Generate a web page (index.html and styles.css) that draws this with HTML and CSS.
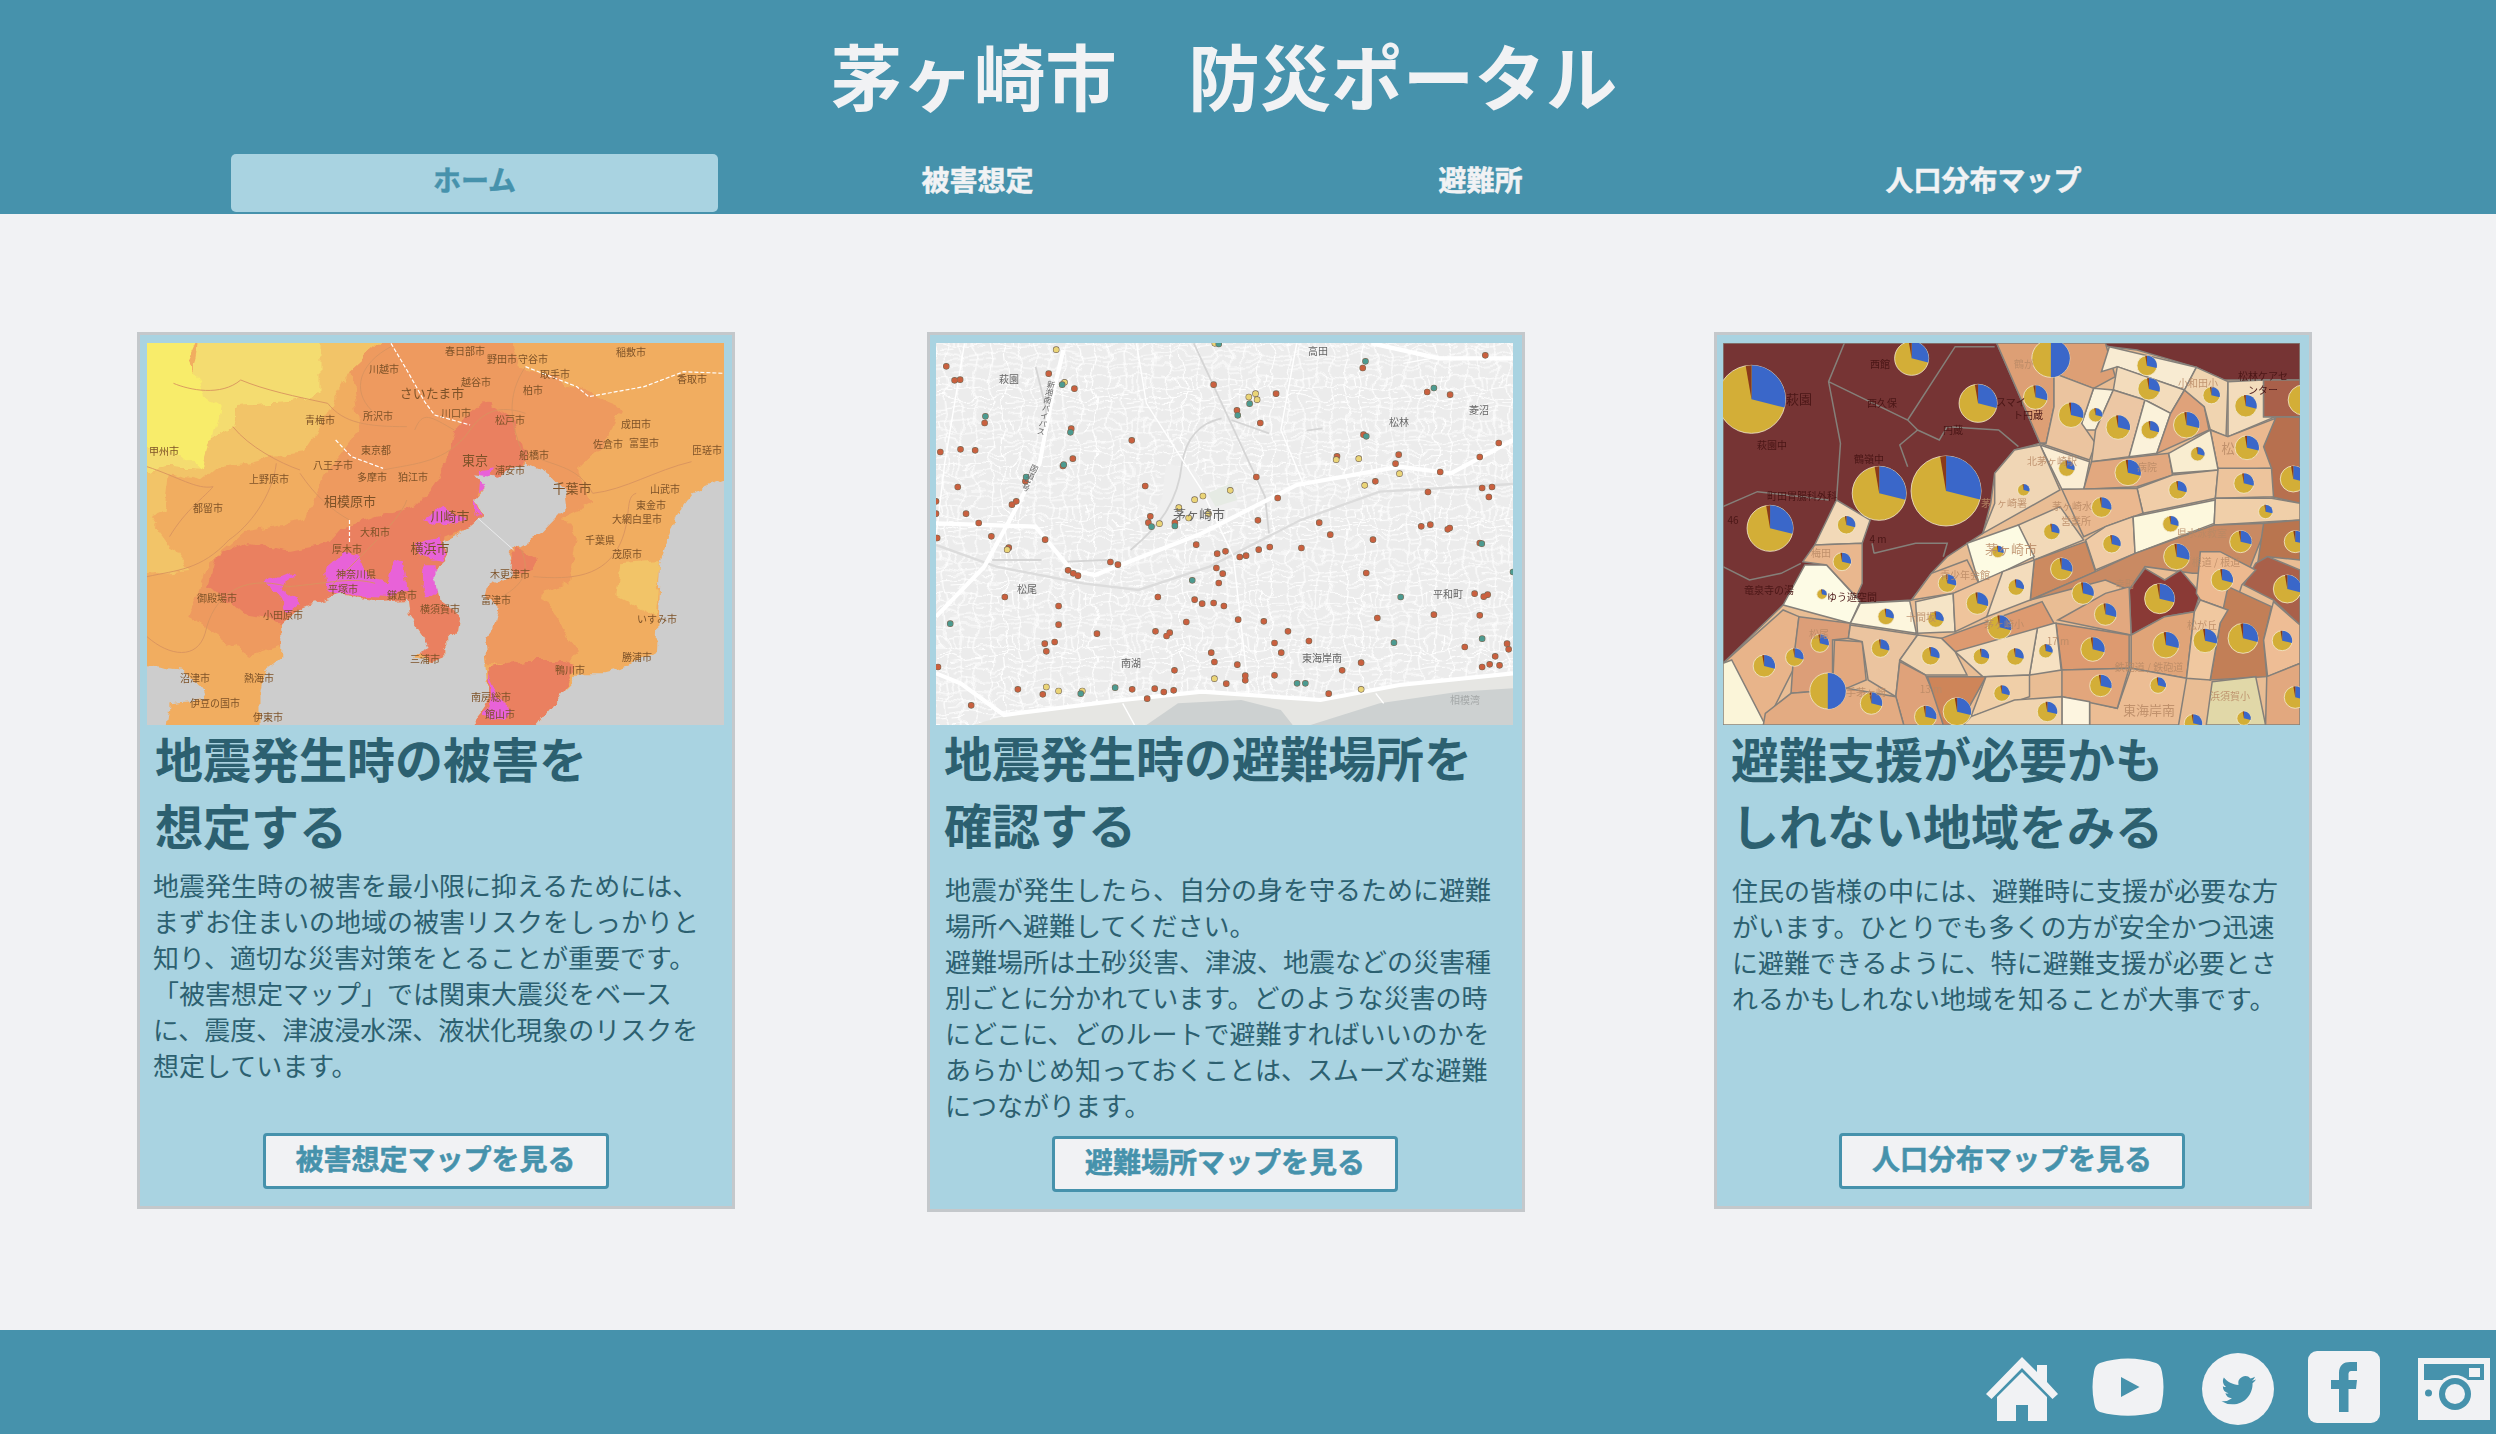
FILE: index.html
```html
<!DOCTYPE html>
<html lang="ja">
  <head>
    <meta charset="UTF-8" />
    <title>茅ヶ崎市　防災ポータル</title>
    <link rel="stylesheet" href="styles.css">
  </head>

  <body>
    <!-- ヘッダー -->
    <header class="site-header">
      <h1 class="site-title">茅ヶ崎市　防災ポータル</h1>
      <nav class="site-nav">
        <a class="nav-item nav-item--active" href="#">ホーム</a>
        <a class="nav-item" href="#">被害想定</a>
        <a class="nav-item" href="#">避難所</a>
        <a class="nav-item" href="#">人口分布マップ</a>
      </nav>
    </header>

    <main class="cards">
      <!-- 被害想定 -->
      <section class="card card--quake">
        <svg class="map" viewBox="0 0 577 382">
          <defs>
            <filter id="rough" x="-5%" y="-5%" width="110%" height="110%">
              <feTurbulence type="fractalNoise" baseFrequency="0.07" numOctaves="3" seed="4" />
              <feDisplacementMap in="SourceGraphic" scale="11" xChannelSelector="R" yChannelSelector="G" />
            </filter>
          </defs>
          <rect width="577" height="382" fill="#f1ad60" />
          <g filter="url(#rough)">
            <g transform="scale(.39547 .33333) translate(-43 -39)">
              <polygon fill="#f4dc70" points="180,10 480,10 480,190 420,215 280,225 260,290 200,340 180,420 90,415 10,430 10,340 130,370" />
              <polygon fill="#f8ec6a" points="10,10 180,10 150,90 190,200 230,230 210,330 180,420 130,370 10,340" />
              <polygon fill="#f2c468" points="480,10 660,10 560,120 520,200 480,300 440,370 360,380 300,400 215,415 180,450 100,430 90,540 50,560 100,640 150,720 10,740 10,430 90,415 180,420 200,340 260,290 280,225 420,215 480,190" />
              <polygon fill="#f2c468" points="1240,700 1340,690 1330,860 1230,800" />
              <polygon fill="#ee9a5e" points="660,10 950,10 990,110 1120,170 1240,230 1210,330 1130,420 1170,520 1100,560 1130,620 1110,760 1040,790 1130,960 1110,1000 900,1000 880,800 700,900 400,940 300,980 200,900 150,860 200,700 300,600 440,570 500,420 580,300 560,120" />
              <polygon fill="#ea8060" points="820,300 900,210 960,260 990,340 1000,390 940,460 880,480 870,520 890,560 860,590 800,620 790,650 800,690 770,720 770,770 780,810 835,860 830,900 790,950 790,985 760,1000 720,960 745,930 705,860 700,810 640,815 530,795 440,825 385,880 330,860 280,850 200,770 220,680 300,640 400,660 500,640 530,600 620,560 720,530 760,480 800,400" />
              <polygon fill="#ea8060" points="905,1010 1000,990 1100,990 1130,1000 1100,1080 1010,1215 845,1215 890,1150 905,1100" />
              <polygon fill="#ea8060" points="960,700 985,650 1030,690 1020,720 960,730" />
              <polygon fill="#e862d8" points="490,720 540,670 580,680 600,740 650,760 670,690 690,700 700,780 650,800 530,795 500,780" />
              <polygon fill="#e862d8" points="340,760 400,730 420,740 380,770 430,820 400,850 380,800" />
              <polygon fill="#e862d8" points="720,640 780,620 795,690 740,680" />
              <polygon fill="#e862d8" points="745,700 770,700 775,780 750,800 740,770" />
              <polygon fill="#e862d8" points="740,570 790,530 850,570 790,590" />
              <polygon fill="#e862d8" points="885,420 920,415 900,470 880,490" />
              <polygon fill="#e862d8" points="870,510 885,560 870,550" />
              <polygon fill="#e862d8" points="905,1030 930,1100 970,1140 950,1170 890,1160 915,1110" />
              <!-- 海 -->
              <polygon fill="#cdcdcd" points="385,880 440,825 530,795 640,815 700,810 705,860 745,930 755,960 720,980 760,1000 790,985 790,950 830,900 835,860 780,810 770,760 770,720 800,690 790,640 860,590 890,560 870,510 900,470 870,430 930,440 1000,400 1060,430 1100,480 1105,530 1040,610 970,660 960,700 960,730 900,770 895,795 935,830 920,900 895,940 900,1020 905,1100 890,1150 845,1215 330,1215 330,1080 340,1020 385,980" />
              <polygon fill="#cdcdcd" points="10,1000 130,1020 175,1060 190,1110 100,1120 90,1215 10,1215" />
              <polygon fill="#cdcdcd" points="1010,1215 1100,1080 1140,1030 1200,1030 1260,1010 1330,960 1335,860 1340,700 1380,560 1430,480 1535,430 1535,1215" />
            </g>
          </g>
          <g transform="scale(.39547 .33333) translate(-43 -39)">
            <!-- 道路 -->
            <path class="map-line map-line--road" d="M43 410C120 440 170 480 210 470M43 740C120 720 180 720 250 630C300 590 360 500 370 400M100 620C140 540 190 500 210 470M430 430C470 500 510 540 555 570M640 420C720 400 800 400 860 300C900 230 950 230 1000 250M700 510C680 580 560 700 500 780M1010 370C1060 410 1130 400 1170 490C1250 480 1330 420 1420 395M1020 740C1120 750 1200 740 1240 640C1270 560 1250 500 1280 490M940 800C1000 760 1010 720 990 660M43 920C100 980 170 990 190 910C210 800 280 730 400 770C500 760 560 740 620 760M610 240C560 180 580 100 660 50M1000 110C950 200 960 280 1000 390M820 300C760 260 740 240 720 300M260 290C300 350 380 400 430 420M110 160C150 180 230 200 280 150C340 180 420 200 500 220C540 280 600 290 700 290" />
            <path class="map-line map-line--river" d="M660 40L700 120 745 215 770 255 860 285M1000 110L1130 170 1160 200 1300 170 1400 125 1502 130M520 330L560 380 640 415M555 570V640" />
            <path class="map-line map-line--bridge" d="M880 565L970 660" />
          </g>
          <g class="map-labels map-labels--quake">
            <text x="318" y="7">春日部市</text><text x="355" y="15">野田市</text><text x="386" y="15">守谷市</text>
            <text x="237" y="25">川越市</text><text x="329" y="38">越谷市</text><text class="map-big" x="285" y="49">さいたま市</text>
            <text x="386" y="46">柏市</text><text x="484" y="8">稲敷市</text><text x="545" y="35">香取市</text>
            <text x="408" y="30">取手市</text><text x="309" y="69">川口市</text><text x="363" y="76">松戸市</text>
            <text x="231" y="72">所沢市</text><text x="173" y="76">青梅市</text><text x="489" y="80">成田市</text>
            <text x="461" y="100">佐倉市</text><text x="497" y="99">富里市</text><text x="560" y="106">匝瑳市</text>
            <text x="17" y="107">甲州市</text><text x="229" y="106">東京都</text><text class="map-big" x="328" y="116">東京</text>
            <text x="387" y="111">船橋市</text><text x="186" y="121">八王子市</text><text x="363" y="126">浦安市</text>
            <text x="225" y="133">多摩市</text><text x="266" y="133">狛江市</text><text x="122" y="135">上野原市</text>
            <text class="map-big" x="425" y="144">千葉市</text><text x="518" y="145">山武市</text><text class="map-big" x="203" y="157">相模原市</text>
            <text x="504" y="161">東金市</text><text x="61" y="164">都留市</text><text class="map-big" x="303" y="172">川崎市</text>
            <text x="490" y="175">大網白里市</text><text x="228" y="188">大和市</text><text x="453" y="196">千葉県</text>
            <text class="map-big" x="283" y="204">横浜市</text><text x="200" y="205">厚木市</text><text x="480" y="210">茂原市</text>
            <text x="209" y="230">神奈川県</text><text x="363" y="230">木更津市</text><text x="196" y="245">平塚市</text>
            <text x="255" y="251">鎌倉市</text><text x="70" y="254">御殿場市</text><text x="349" y="256">富津市</text>
            <text x="293" y="265">横須賀市</text><text x="136" y="271">小田原市</text><text x="510" y="275">いすみ市</text>
            <text x="278" y="315">三浦市</text><text x="490" y="313">勝浦市</text><text x="423" y="326">鴨川市</text>
            <text x="48" y="334">沼津市</text><text x="112" y="334">熱海市</text><text x="344" y="353">南房総市</text>
            <text x="68" y="359">伊豆の国市</text><text x="353" y="370">館山市</text><text x="121" y="373">伊東市</text>
          </g>
        </svg>
        <h2 class="card-title">地震発生時の被害を<br>想定する</h2>
        <p class="card-text">地震発生時の被害を最小限に抑えるためには、まずお住まいの地域の被害リスクをしっかりと知り、適切な災害対策をとることが重要です。<br>「被害想定マップ」では関東大震災をベースに、震度、津波浸水深、液状化現象のリスクを想定しています。</p>
        <a class="card-button" href="#">被害想定マップを見る</a>
      </section>

      <!-- 避難所 -->
      <section class="card card--shelter">
        <svg class="map" viewBox="0 0 577 382">
          <defs>
            <pattern id="streets" width="150" height="130" patternUnits="userSpaceOnUse">
              <path class="map-street" d="M0 12L40 18 90 8 150 14M0 42L36 38 80 50 150 40M0 74L50 66 100 80 150 72M0 104L30 110 90 100 150 108M18 0L14 40 24 80 16 130M52 0L58 36 48 74 54 130M92 0L86 50 96 90 90 130M128 0L122 40 134 80 126 130M36 18L40 38M70 8L74 46M110 6L106 44M30 58L70 54M100 26L126 22M4 88L30 86M60 88L92 84M110 90L150 88M70 118L100 116M20 122L50 120M136 50L150 52" />
            </pattern>
            <filter id="wobble" x="-5%" y="-5%" width="110%" height="110%">
              <feTurbulence type="fractalNoise" baseFrequency="0.05" numOctaves="2" seed="9" />
              <feDisplacementMap in="SourceGraphic" scale="14" xChannelSelector="R" yChannelSelector="G" />
            </filter>
          </defs>
          <rect width="577" height="382" fill="#ececec" />
          <g filter="url(#wobble)">
            <g transform="scale(.39547 .33333) translate(-28 -39)">
              <rect x="0" y="10" width="1520" height="1210" fill="url(#streets)" />
            </g>
          </g>
          <g transform="scale(.39547 .33333) translate(-28 -39)">
            <polygon fill="#efefef" points="610,400 680,420 720,490 790,470 790,530 620,590 560,620 600,500" />
            <polygon fill="#e6ebe4" points="715,490 775,460 790,510 735,530" />
            <polygon fill="#e6e6e3" points="120,1185 200,1158 500,1112 700,1088 1000,1112 1200,1068 1487,1034 1487,1185" />
            <polygon fill="#cdd1d1" points="560,1185 640,1120 800,1110 900,1140 930,1185" />
            <polygon fill="#cdd1d1" points="975,1185 1150,1120 1350,1085 1487,1075 1487,1185" />
            <path class="map-line map-line--rail" d="M28 645L180 710 400 760 540 780 720 710 950 570 1150 485 1487 462" />
            <path class="map-line map-line--gray" d="M280 110L305 230 310 300 290 400M520 660C590 590 640 520 650 400C660 330 690 280 750 265M775 270L870 310M965 302L1005 295M170 690H295M360 695L460 690M680 40L860 500 870 610" />
            <path class="map-line map-line--main" d="M350 60L320 210 290 400 210 580 150 710 28 860M28 580L280 590 370 720 430 735 700 610 940 465 1200 410 1330 430 1487 330M28 1030L90 1060 200 1155 500 1110 700 1085 1000 1110 1200 1065 1487 1030M1130 40L1300 85 1487 85" />
            <path class="map-line map-line--minor" d="M535 40L560 220 700 480 780 680 820 1100M940 40L900 300 960 470M100 40L50 400 28 620M1210 100L1280 85M500 1120L530 1185M1140 1090L1160 1120" />
            <!-- 避難所の点 -->
            <path class="map-dot map-dot--edge" d="M54 109h0M75 151h0M89 149h0M313 131h0M378 176h0M730 164h0M888 191h0M1417 76h0M1107 114h0M1270 186h0M1328 194h0M789 241h0M848 279h0M151 279h0M370 296h0M523 331h0M1109 314h0M39 366h0M90 358h0M127 361h0M374 386h0M349 408h0M1042 379h0M1198 374h0M1190 401h0M1403 381h0M1451 339h0M838 441h0M1303 426h0M254 454h0M83 471h0M557 468h0M1139 454h0M1409 474h0M1434 471h0M1272 486h0M1426 501h0M892 504h0M231 514h0M220 524h0M28 514h0M28 551h0M104 551h0M570 559h0M136 579h0M565 578h0M632 578h0M842 571h0M997 578h0M1255 589h0M1278 584h0M1327 594h0M1322 598h0M168 619h0M31 624h0M304 629h0M1025 614h0M1133 629h0M686 644h0M1403 639h0M212 653h0M952 654h0M872 651h0M844 659h0M760 664h0M739 671h0M812 677h0M796 681h0M469 696h0M488 704h0M737 714h0M362 721h0M375 730h0M387 737h0M753 731h0M1116 729h0M743 759h0M589 801h0M202 801h0M682 809h0M701 821h0M730 819h0M756 828h0M1390 791h0M1423 794h0M1413 800h0M338 828h0M1287 854h0M1403 856h0M792 869h0M857 874h0M661 876h0M1144 864h0M338 884h0M583 904h0M918 904h0M619 908h0M611 918h0M435 911h0M328 936h0M303 941h0M884 939h0M971 933h0M1472 941h0M1365 951h0M1476 958h0M307 964h0M724 968h0M901 968h0M1442 979h0M732 996h0M790 1004h0M1103 998h0M1428 1003h0M1453 1006h0M1409 1011h0M33 1011h0M631 1021h0M1055 1021h0M810 1037h0M884 1036h0M810 1051h0M762 1061h0M235 1078h0M524 1078h0M581 1076h0M604 1086h0M629 1081h0M298 1093h0M562 1106h0M1021 1091h0M117 1126h0" />
            <path class="map-dot map-dot--red" d="M54 109h0M75 151h0M89 149h0M313 131h0M378 176h0M730 164h0M888 191h0M1417 76h0M1107 114h0M1270 186h0M1328 194h0M789 241h0M848 279h0M151 279h0M370 296h0M523 331h0M1109 314h0M39 366h0M90 358h0M127 361h0M374 386h0M349 408h0M1042 379h0M1198 374h0M1190 401h0M1403 381h0M1451 339h0M838 441h0M1303 426h0M254 454h0M83 471h0M557 468h0M1139 454h0M1409 474h0M1434 471h0M1272 486h0M1426 501h0M892 504h0M231 514h0M220 524h0M28 514h0M28 551h0M104 551h0M570 559h0M136 579h0M565 578h0M632 578h0M842 571h0M997 578h0M1255 589h0M1278 584h0M1327 594h0M1322 598h0M168 619h0M31 624h0M304 629h0M1025 614h0M1133 629h0M686 644h0M1403 639h0M212 653h0M952 654h0M872 651h0M844 659h0M760 664h0M739 671h0M812 677h0M796 681h0M469 696h0M488 704h0M737 714h0M362 721h0M375 730h0M387 737h0M753 731h0M1116 729h0M743 759h0M589 801h0M202 801h0M682 809h0M701 821h0M730 819h0M756 828h0M1390 791h0M1423 794h0M1413 800h0M338 828h0M1287 854h0M1403 856h0M792 869h0M857 874h0M661 876h0M1144 864h0M338 884h0M583 904h0M918 904h0M619 908h0M611 918h0M435 911h0M328 936h0M303 941h0M884 939h0M971 933h0M1472 941h0M1365 951h0M1476 958h0M307 964h0M724 968h0M901 968h0M1442 979h0M732 996h0M790 1004h0M1103 998h0M1428 1003h0M1453 1006h0M1409 1011h0M33 1011h0M631 1021h0M1055 1021h0M810 1037h0M884 1036h0M810 1051h0M762 1061h0M235 1078h0M524 1078h0M581 1076h0M604 1086h0M629 1081h0M298 1093h0M562 1106h0M1021 1091h0M117 1126h0" />
            <path class="map-dot map-dot--edge" d="M332 59h0M353 157h0M819 201h0M836 191h0M840 209h0M1040 389h0M1097 386h0M1200 431h0M1112 466h0M772 481h0M703 498h0M682 509h0M642 533h0M667 564h0M717 551h0M593 581h0M208 659h0M732 1046h0M307 1071h0M338 1083h0M398 1083h0M1103 1078h0M733 40h0" />
            <path class="map-dot map-dot--yellow" d="M332 59h0M353 157h0M819 201h0M836 191h0M840 209h0M1040 389h0M1097 386h0M1200 431h0M1112 466h0M772 481h0M703 498h0M682 509h0M642 533h0M667 564h0M717 551h0M593 581h0M208 659h0M732 1046h0M307 1071h0M338 1083h0M398 1083h0M1103 1078h0M733 40h0" />
            <path class="map-dot map-dot--edge" d="M743 42h0M1114 94h0M347 164h0M1287 174h0M821 221h0M791 256h0M153 259h0M368 307h0M1116 319h0M351 404h0M256 441h0M573 590h0M632 588h0M1408 641h0M676 751h0M1203 801h0M64 881h0M1186 938h0M1409 926h0M941 1060h0M962 1060h0M481 1073h0M394 1091h0M1487 726h0" />
            <path class="map-dot map-dot--teal" d="M743 42h0M1114 94h0M347 164h0M1287 174h0M821 221h0M791 256h0M153 259h0M368 307h0M1116 319h0M351 404h0M256 441h0M573 590h0M632 588h0M1408 641h0M676 751h0M1203 801h0M64 881h0M1186 938h0M1409 926h0M941 1060h0M962 1060h0M481 1073h0M394 1091h0M1487 726h0" />
          </g>
          <g class="map-labels map-labels--shelter">
            <text x="73" y="35">萩園</text><text x="382" y="7">高田</text><text x="463" y="78">松林</text><text x="543" y="66">菱沼</text>
            <text class="map-big" x="263" y="170">茅ヶ崎市</text><text x="91" y="245">松尾</text><text x="512" y="250">平和町</text>
            <text x="195" y="319">南湖</text><text x="386" y="314">東海岸南</text><text class="map-faint" x="529" y="356">相模湾</text>
            <text class="map-road-name" transform="translate(110 65) rotate(12)">新湘南バイパス</text>
            <text class="map-road-name" transform="translate(94 135) rotate(24)">国道1号</text>
          </g>
        </svg>
        <h2 class="card-title">地震発生時の避難場所を<br>確認する</h2>
        <p class="card-text">地震が発生したら、自分の身を守るために避難場所へ避難してください。<br>避難場所は土砂災害、津波、地震などの災害種別ごとに分かれています。どのような災害の時にどこに、どのルートで避難すればいいのかをあらかじめ知っておくことは、スムーズな避難につながります。</p>
        <a class="card-button" href="#">避難場所マップを見る</a>
      </section>

      <!-- 人口分布 -->
      <section class="card card--aid">
        <svg class="map" viewBox="0 0 577 382">
          <defs>
            <g id="pie" transform="scale(2.529 3)">
              <circle class="pie-base" r="1" />
              <path class="pie-blue" d="M0 0V-1A1 1 0 0 1 .97 .24Z" />
              <path class="pie-brown" d="M0 0L-.17 -.98A1 1 0 0 1 0 -1Z" />
            </g>
            <g id="pie-half" transform="scale(2.529 3)">
              <circle class="pie-base" r="1" />
              <path class="pie-blue" d="M0 0V-1A1 1 0 0 1 0 1Z" />
            </g>
          </defs>
          <rect width="577" height="382" fill="#e9bd94" />
          <g class="map-areas" transform="scale(.39547 .33333) translate(-33 -39)">
            <polygon fill="#763434" points="33,39 725,39 835,340 770,360 720,430 710,520 690,610 600,680 560,730 510,810 380,820 185,825 33,1000" />
            <polygon fill="#763434" points="980,39 1492,39 1492,150 1300,150 1230,112 1080,60 1010,50" />
            <polygon fill="#dd9f75" points="725,39 1000,39 1025,140 970,175 870,130 870,230 850,340 835,340" />
            <polygon fill="#f8ebd2" points="1010,50 1230,112 1200,180 1030,110 990,125" />
            <polygon fill="#f3dcbc" points="1030,110 1200,180 1165,250 1100,210 1020,180" />
            <polygon fill="#fbf2da" points="970,175 1020,180 975,300 935,300 940,280" />
            <polygon fill="#ebc49f" points="870,130 970,175 940,280 975,340 960,390 835,340 850,340 870,230" />
            <polygon fill="#ecc7a4" points="1020,180 1100,210 1060,380 965,395 975,300" />
            <polygon fill="#fbf2da" points="1100,210 1165,250 1130,370 1060,380" />
            <polygon fill="#dfa27a" points="1200,180 1250,230 1262,300 1130,370 1165,250" />
            <polygon fill="#f0d4b0" points="1230,112 1310,155 1305,320 1265,298 1250,230 1200,180" />
            <polygon fill="#f3dcbc" points="1310,155 1400,150 1400,260 1430,260 1310,320" />
            <polygon fill="#a9604a" points="1400,150 1492,150 1492,260 1400,260" />
            <polygon fill="#b7704f" points="1430,260 1492,262 1492,520 1420,500 1400,350" />
            <polygon fill="#ebb98f" points="1310,320 1430,265 1400,350 1420,415 1285,420 1265,300" />
            <polygon fill="#fbeed4" points="835,345 960,395 945,480 890,478" />
            <polygon fill="#e2a87f" points="965,395 1160,370 1170,435 1080,470 945,478" />
            <polygon fill="#f9edd0" points="1160,370 1265,300 1285,420 1170,430" />
            <polygon fill="#f0cda8" points="1170,435 1285,420 1278,505 1095,550 1080,475" />
            <polygon fill="#edc49c" points="1285,415 1420,415 1425,500 1278,505" />
            <polygon fill="#f0d6b5" points="770,360 835,345 885,480 690,610 720,520 720,430" />
            <polygon fill="#eab88f" points="890,478 1080,475 1095,550 1000,590 945,620" />
            <polygon fill="#f2d9b8" points="780,585 885,530 945,630 820,690" />
            <polygon fill="#fdfbe3" points="650,640 780,585 820,680 680,760" />
            <polygon fill="#f0cba6" points="950,630 1000,590 1070,560 1075,670 975,720" />
            <polygon fill="#fdf8dd" points="1070,560 1278,510 1275,580 1075,670" />
            <polygon fill="#f0cfa9" points="1278,505 1420,505 1492,520 1492,570 1275,585" />
            <polygon fill="#cc8a60" points="810,810 820,690 950,635 975,725" />
            <polygon fill="#c98a63" points="810,810 975,725 1075,670 1275,585 1410,580 1350,760 1320,730 1220,730 1100,710 1060,780 1000,750" />
            <polygon fill="#8a3a36" points="1100,715 1150,750 1190,720 1240,790 1225,845 1150,860 1065,915 1060,780" />
            <polygon fill="#b9754f" points="1400,580 1492,570 1492,690 1410,680 1385,700" />
            <polygon fill="#a9604a" points="1350,765 1380,700 1410,680 1492,720 1492,885 1425,810" />
            <polygon fill="#edb98f" points="1240,665 1290,665 1380,720 1345,765 1330,820 1310,840 1240,810 1230,790" />
            <polygon fill="#c27f57" points="1310,770 1420,830 1400,930 1408,1040 1265,1050 1290,880" />
            <polygon fill="#eebd95" points="1425,815 1492,885 1492,1000 1410,1040 1400,930" />
            <polygon fill="#e2a87f" points="880,870 1000,790 1060,770 1065,915" />
            <polygon fill="#dd9a70" points="875,880 1060,915 1060,1015 890,1020" />
            <polygon fill="#e0a478" points="1065,915 1150,860 1225,845 1205,1045 1065,1015" />
            <polygon fill="#f0c8a0" points="1240,810 1310,840 1290,880 1265,1050 1205,1045 1225,845" />
            <polygon fill="#e1d8a8" points="1270,1055 1380,1040 1405,1185 1255,1185" />
            <polygon fill="#e2a87f" points="1408,1040 1492,1000 1492,1185 1405,1185" />
            <polygon fill="#ecbd94" points="1065,1015 1205,1045 1185,1185 960,1185 960,1115 1030,1135" />
            <polygon fill="#e2a67c" points="890,1020 1060,1015 1030,1135 890,1100" />
            <polygon fill="#fdf5e0" points="890,1100 960,1115 960,1185 890,1185" />
            <polygon fill="#f6e1c2" points="830,880 875,880 888,1020 808,1035" />
            <polygon fill="#f3dcbc" points="620,965 700,930 830,880 808,1035 690,1040" />
            <polygon fill="#dd9a70" points="585,925 840,815 870,880 620,965" />
            <polygon fill="#f5e4c6" points="520,815 615,790 620,905 525,910" />
            <polygon fill="#eab88f" points="510,810 560,730 650,690 680,760 615,790" />
            <polygon fill="#efc49c" points="615,790 740,725 735,800 700,860 620,905" />
            <polygon fill="#f3dcbc" points="740,725 820,690 810,810 700,860" />
            <polygon fill="#fdfbe5" points="185,825 240,705 295,705 380,815 355,880" />
            <polygon fill="#fdf6dd" points="355,880 380,820 505,812 522,910" />
            <polygon fill="#f2d9b8" points="320,510 405,570 385,640 265,645" />
            <polygon fill="#e9b78e" points="235,695 265,645 385,640 385,760 370,800 295,705" />
            <polygon fill="#e8b48a" points="33,1000 185,840 225,860 210,1020 140,1185 33,1185" />
            <polygon fill="#fbf5d9" points="33,1000 55,990 140,1185 33,1185" />
            <polygon fill="#dc9e78" points="225,860 355,880 350,925 310,930 310,1080 205,1090 210,1000" />
            <polygon fill="#e2a87f" points="315,930 385,935 395,1050 345,1075 310,1080" />
            <polygon fill="#ebc49f" points="355,885 525,915 480,990 470,1100 400,1050 385,935 350,925" />
            <polygon fill="#f0d4b0" points="525,915 585,925 620,965 650,1035 545,1035 480,990" />
            <polygon fill="#dfa27a" points="480,995 545,1035 580,1130 590,1185 490,1185 470,1100" />
            <polygon fill="#ce8559" points="550,1040 698,1040 630,1185 590,1185" />
            <polygon fill="#f0cfa8" points="698,1040 808,1035 808,1100 660,1160" />
            <polygon fill="#f0d4b0" points="660,1160 770,1110 890,1100 890,1185 640,1185" />
            <polygon fill="#e3ab82" points="205,1090 310,1080 345,1075 470,1100 490,1185 135,1185 140,1150" />
            <path class="map-line map-line--border" d="M340 39L300 155 330 340 320 510M300 155L500 270 525 300 480 345 500 410M500 270L620 50 720 50M525 300L580 330 600 290 730 300 780 350M33 530L120 485 300 510M415 670L410 640M415 670L520 640 600 640 590 680M33 710L100 750 180 730 230 700" />
            <use href="#pie" transform="translate(105 208) scale(34)" /><use href="#pie" transform="translate(510 85) scale(17)" />
            <use href="#pie" transform="translate(678 220) scale(19)" /><use href="#pie-half" transform="translate(862 85) scale(19)" />
            <use href="#pie" transform="translate(1105 107) scale(10)" /><use href="#pie" transform="translate(1110 177) scale(11)" />
            <use href="#pie" transform="translate(1268 196) scale(8.5)" /><use href="#pie" transform="translate(1355 228) scale(11)" />
            <use href="#pie" transform="translate(1500 210) scale(15)" /><use href="#pie" transform="translate(823 202) scale(12)" />
            <use href="#pie" transform="translate(913 255) scale(12.5)" /><use href="#pie" transform="translate(975 255) scale(7)" />
            <use href="#pie" transform="translate(1032 292) scale(12)" /><use href="#pie" transform="translate(1113 300) scale(9)" />
            <use href="#pie" transform="translate(1205 285) scale(13)" /><use href="#pie" transform="translate(1358 353) scale(12)" />
            <use href="#pie" transform="translate(1233 372) scale(7)" /><use href="#pie" transform="translate(902 415) scale(8)" />
            <use href="#pie" transform="translate(1057 428) scale(13)" /><use href="#pie" transform="translate(1183 480) scale(9)" />
            <use href="#pie" transform="translate(1350 460) scale(10)" /><use href="#pie" transform="translate(1475 447) scale(13)" />
            <use href="#pie" transform="translate(1405 545) scale(7)" /><use href="#pie" transform="translate(793 480) scale(6)" />
            <use href="#pie" transform="translate(990 532) scale(10)" /><use href="#pie" transform="translate(345 585) scale(9)" />
            <use href="#pie" transform="translate(864 605) scale(8)" /><use href="#pie" transform="translate(1016 642) scale(9)" />
            <use href="#pie" transform="translate(1165 582) scale(8)" /><use href="#pie" transform="translate(1342 635) scale(11)" />
            <use href="#pie" transform="translate(1480 635) scale(11)" /><use href="#pie" transform="translate(428 490) scale(27)" />
            <use href="#pie" transform="translate(597 483) scale(35)" /><use href="#pie" transform="translate(152 595) scale(23)" />
            <use href="#pie" transform="translate(334 695) scale(9)" /><use href="#pie" transform="translate(728 665) scale(6)" />
            <use href="#pie" transform="translate(889 717) scale(11)" /><use href="#pie" transform="translate(1180 680) scale(13)" />
            <use href="#pie" transform="translate(1295 750) scale(11)" /><use href="#pie" transform="translate(1460 777) scale(14)" />
            <use href="#pie" transform="translate(283 793) scale(5)" /><use href="#pie" transform="translate(600 760) scale(9)" />
            <use href="#pie" transform="translate(676 820) scale(11)" /><use href="#pie" transform="translate(774 772) scale(8)" />
            <use href="#pie" transform="translate(943 790) scale(11)" /><use href="#pie" transform="translate(1000 853) scale(11)" />
            <use href="#pie" transform="translate(1137 806) scale(15)" /><use href="#pie" transform="translate(445 860) scale(8)" />
            <use href="#pie" transform="translate(571 868) scale(8)" /><use href="#pie" transform="translate(732 892) scale(12)" />
            <use href="#pie" transform="translate(1153 945) scale(13)" /><use href="#pie" transform="translate(1252 932) scale(12)" />
            <use href="#pie" transform="translate(1348 925) scale(15)" /><use href="#pie" transform="translate(1447 932) scale(10)" />
            <use href="#pie" transform="translate(278 940) scale(9)" /><use href="#pie" transform="translate(214 982) scale(9)" />
            <use href="#pie" transform="translate(431 955) scale(9)" /><use href="#pie" transform="translate(558 978) scale(9)" />
            <use href="#pie" transform="translate(686 980) scale(8)" /><use href="#pie" transform="translate(772 980) scale(8.5)" />
            <use href="#pie" transform="translate(849 963) scale(7)" /><use href="#pie" transform="translate(968 958) scale(12)" />
            <use href="#pie" transform="translate(137 1008) scale(11)" /><use href="#pie-half" transform="translate(298 1083) scale(18)" />
            <use href="#pie" transform="translate(408 1120) scale(11)" /><use href="#pie" transform="translate(545 1160) scale(11)" />
            <use href="#pie" transform="translate(625 1145) scale(14)" /><use href="#pie" transform="translate(738 1090) scale(8)" />
            <use href="#pie" transform="translate(853 1145) scale(10)" /><use href="#pie" transform="translate(988 1067) scale(11)" />
            <use href="#pie" transform="translate(1133 1066) scale(8)" /><use href="#pie" transform="translate(1480 1102) scale(11)" />
            <use href="#pie" transform="translate(1222 1180) scale(9)" /><use href="#pie" transform="translate(1350 1165) scale(7)" />
          </g>
          <g class="map-labels map-labels--dark">
            <text x="157" y="20">西館</text><text x="159" y="59">西久保</text><text class="map-big" x="76" y="55">萩園</text>
            <text x="49" y="101">萩園中</text><text x="288" y="58">スマイ</text><text x="305" y="71">ト円蔵</text>
            <text x="230" y="86">円蔵</text><text x="146" y="115">鶴嶺中</text><text x="79" y="152">町田胃腸科外科</text>
            <text x="10" y="176">46</text><text x="155" y="195">4 m</text><text x="46" y="246">竜泉寺の湯</text>
            <text x="129" y="253">ゆう遊空間</text><text x="540" y="32">松林ケアセ</text><text x="540" y="46">ンター</text>
          </g>
          <g class="map-labels map-labels--light">
            <text x="263" y="159">茅</text><text x="289" y="159">ヶ崎署</text><text x="349" y="162">茅ヶ崎水</text>
            <text x="353" y="177">営業所</text><text class="map-big" x="288" y="205">茅ヶ崎市</text><text x="98" y="209">梅田</text>
            <text x="242" y="231">青少年会館</text><text x="96" y="290">松尾</text><text x="198" y="273">十間坂</text>
            <text x="281" y="280">茅ヶ崎小</text><text x="335" y="297">17 m</text><text x="143" y="348">手茅ヶ崎</text>
            <text x="208" y="345">13 m</text><text x="426" y="323">鉄砲道 / 鉄砲道</text><text x="479" y="281">松が丘</text>
            <text x="507" y="352">浜須賀小</text><text class="map-big" x="426" y="366">東海岸南</text><text x="475" y="39">小和田小</text>
            <text x="301" y="20">鶴が</text><text class="map-big" x="505" y="104">松</text><text x="424" y="123">病院</text>
            <text x="329" y="117">北茅ヶ崎駅</text><text x="493" y="218">根道 / 根道</text><text x="479" y="189">県水泳教室</text>
            <text x="402" y="240">幸町</text>
          </g>
        </svg>
        <h2 class="card-title">避難支援が必要かも<br>しれない地域をみる</h2>
        <p class="card-text">住民の皆様の中には、避難時に支援が必要な方がいます。ひとりでも多くの方が安全かつ迅速に避難できるように、特に避難支援が必要とされるかもしれない地域を知ることが大事です。</p>
        <a class="card-button" href="#">人口分布マップを見る</a>
      </section>
    </main>

    <!-- フッター -->
    <footer class="site-footer">
      <a class="footer-icon" href="#" aria-label="ホーム">
        <svg viewBox="0 0 72 72">
          <path class="icon-fill" d="M36 5L51 20V13H61V30L72 42 66.5 47 36 16 5.5 47 0 42Z" />
          <path class="icon-fill" d="M36 20L61 45V69H42V53H30V69H11V45Z" />
        </svg>
      </a>
      <a class="footer-icon" href="#" aria-label="YouTube">
        <svg viewBox="2 0 72 72">
          <path class="icon-fill" fill-rule="evenodd" d="M8 11C26 5 46 5 64 11 68 13 69 15 70 20 72 30 72 40 70 50 69 56 68 58 64 60 46 65 26 65 8 60 4 58 3 56 2 50 0 40 0 30 2 20 3 15 4 13 8 11ZM29 25V45L47.5 35Z" />
        </svg>
      </a>
      <a class="footer-icon" href="#" aria-label="Twitter">
        <svg viewBox="0 0 72 72">
          <circle class="icon-fill" cx="36" cy="37" r="36" />
          <path class="icon-hole" transform="translate(19.5 21) scale(1.44)" d="M23.953 4.57a10 10 0 01-2.825.775 4.958 4.958 0 002.163-2.723c-.951.555-2.005.959-3.127 1.184a4.92 4.92 0 00-8.384 4.482C7.69 8.095 4.067 6.13 1.64 3.162a4.822 4.822 0 00-.666 2.475c0 1.71.87 3.213 2.188 4.096a4.904 4.904 0 01-2.228-.616v.06a4.923 4.923 0 003.946 4.827 4.996 4.996 0 01-2.212.085 4.936 4.936 0 004.604 3.417 9.867 9.867 0 01-6.102 2.105c-.39 0-.779-.023-1.17-.067a13.995 13.995 0 007.557 2.209c9.053 0 13.998-7.496 13.998-13.985 0-.21 0-.42-.015-.63A9.935 9.935 0 0024 4.59z" />
        </svg>
      </a>
      <a class="footer-icon" href="#" aria-label="Facebook">
        <svg viewBox="2 1 72 72">
          <rect class="icon-fill" width="72" height="72" rx="9" />
          <path class="icon-hole" d="M31 61V38H23V29H31V22C31 14 36 11 42 11H49V20H44C41 20 40.5 21.5 40.5 24V29H49L48 38H40.5V61Z" />
        </svg>
      </a>
      <a class="footer-icon" href="#" aria-label="Instagram">
        <svg viewBox="0 0 72 72">
          <rect class="icon-fill" y="6" width="72" height="62" />
          <rect class="icon-hole" x="6" y="12" width="60" height="16" />
          <rect class="icon-fill" x="51" y="16" width="11" height="9" />
          <circle class="icon-fill" cx="37" cy="42" r="19" />
          <circle class="icon-hole" cx="37" cy="42" r="16" />
          <circle class="icon-fill" cx="37" cy="42" r="10" />
          <circle class="icon-hole" cx="10.5" cy="41" r="3.5" />
        </svg>
      </a>
    </footer>
  </body>
</html>
```

FILE: styles.css
```css
* {
  margin: 0;
  padding: 0;
  box-sizing: border-box;
}

body {
  background-color: #f1f2f4;
  font-family: "Noto Sans CJK JP", "Noto Sans", sans-serif;
  display: flex;
  flex-direction: column;
  min-height: 1434px;
}

a {
  text-decoration: none;
}

/* ヘッダー */
.site-header {
  height: 214px;
  background-color: #4692ac;
  padding-top: 24px;
}

.site-title {
  height: 112px;
  padding-right: 48px;
  font-size: 71.5px;
  line-height: 100px;
  font-weight: 700;
  text-align: center;
  color: #f1f2f4;
}

.site-nav {
  display: grid;
  grid-template-columns: repeat(4, 487px);
  column-gap: 16px;
  margin: 18px 0 0 231px;
}

.nav-item {
  height: 58px;
  padding-bottom: 8px;
  border-radius: 5px;
  font-size: 28px;
  line-height: 50px;
  font-weight: 700;
  -webkit-text-stroke: 0.5px currentColor;
  text-align: center;
  color: #f1f2f4;
}

.nav-item--active {
  background-color: #a9d3e1;
  color: #4692ac;
}

/* カード */
.cards {
  display: flex;
  align-items: flex-start;
  gap: 189px;
  padding: 118px 0 0 137px;
}

.card {
  display: flex;
  flex-direction: column;
  flex: none;
  width: 598px;
  height: 877px;
  padding: 8px 8px 17px 7px;
  border: 3px solid #c4c8cb;
  background-color: #a9d3e1;
  color: #2c6070;
}

.card--shelter {
  height: 880px;
  margin-left: 3px;
  padding-left: 6px;
}

.card--aid {
  padding-left: 6px;
}

.map {
  display: block;
  flex: none;
  width: 577px;
  height: 382px;
  filter: blur(0.4px);
}

.card-title {
  margin: -1px 0 0 8px;
  font-size: 48px;
  line-height: 67px;
  font-weight: 700;
}

.card--shelter .card-title {
  margin: -2px 0 0 8px;
}

.card--aid .card-title {
  margin: -1px 0 0 8px;
}

.card-text {
  margin: 9px 0 0 6px;
  width: 548px;
  font-size: 26px;
  line-height: 36px;
}

.card--shelter .card-text {
  margin: 14px 0 0 9px;
}

.card--aid .card-text {
  margin: 14px 0 0 9px;
}

.card-button {
  display: block;
  width: 346px;
  height: 56px;
  margin: auto auto 0;
  border: 3px solid #4692ac;
  border-radius: 4px;
  background-color: #f1f2f4;
  font-size: 28px;
  line-height: 44px;
  font-weight: 700;
  -webkit-text-stroke: 0.5px currentColor;
  text-align: center;
  color: #4692ac;
}

/* 地図 */
.map-line {
  fill: none;
  vector-effect: non-scaling-stroke;
}

.map-street {
  fill: none;
  stroke: #fff;
  stroke-width: 3;
}

.map-line--road {
  stroke: #d8935f;
  stroke-width: 0.9;
}

.map-line--river {
  stroke: #fff;
  stroke-width: 1.2;
  stroke-dasharray: 4 2;
}

.map-line--bridge {
  stroke: #f1f2f4;
  stroke-width: 0.8;
}

.map-line--minor {
  stroke: #fff;
  stroke-width: 1.4;
}

.map-line--main {
  stroke: #fff;
  stroke-width: 4.2;
}

.map-line--gray {
  stroke: #d5d5d5;
  stroke-width: 1.8;
}

.map-line--rail {
  stroke: #dcdcdc;
  stroke-width: 2.4;
}

.map-line--border {
  stroke: #85807a;
  stroke-width: 1.5;
}

.map-areas polygon {
  stroke: #85807a;
  stroke-width: 1.5;
  vector-effect: non-scaling-stroke;
}

.map-dot {
  fill: none;
  stroke-linecap: round;
  vector-effect: non-scaling-stroke;
}

.map-dot--edge {
  stroke: #7a6a55;
  stroke-width: 6.6;
}

.map-dot--red {
  stroke: #c9603f;
  stroke-width: 5.4;
}

.map-dot--yellow {
  stroke: #ead477;
  stroke-width: 5.4;
}

.map-dot--teal {
  stroke: #4c9a90;
  stroke-width: 5.4;
}

.map-labels text {
  font-size: 10px;
  text-anchor: middle;
  dominant-baseline: central;
}

.map-labels .map-big {
  font-size: 13px;
}

.map-labels--quake text {
  fill: #7d5228;
}

.map-labels--shelter text {
  fill: #666;
}

.map-labels--shelter .map-faint {
  fill: #a5a9a9;
}

.map-labels .map-road-name {
  font-size: 8px;
  writing-mode: vertical-rl;
}

.map-labels--dark text {
  fill: #4a1616;
}

.map-labels--light text {
  fill: #b98a66;
  opacity: 0.85;
}

.pie-base {
  fill: #d3ae37;
  stroke: #f3ead0;
  stroke-width: 0.8;
  vector-effect: non-scaling-stroke;
}

.pie-blue {
  fill: #3a67c9;
}

.pie-brown {
  fill: #8a3a1a;
}

/* フッター */
.site-footer {
  display: flex;
  justify-content: flex-end;
  gap: 36px;
  height: 104px;
  margin-top: auto;
  padding: 22px 6px 0 0;
  background-color: #4692ac;
}

.footer-icon {
  display: block;
  width: 72px;
  height: 72px;
}

.footer-icon svg {
  display: block;
  width: 100%;
  height: 100%;
  overflow: visible;
}

.icon-fill {
  fill: #f1f2f4;
}

.icon-hole {
  fill: #4692ac;
}
```
